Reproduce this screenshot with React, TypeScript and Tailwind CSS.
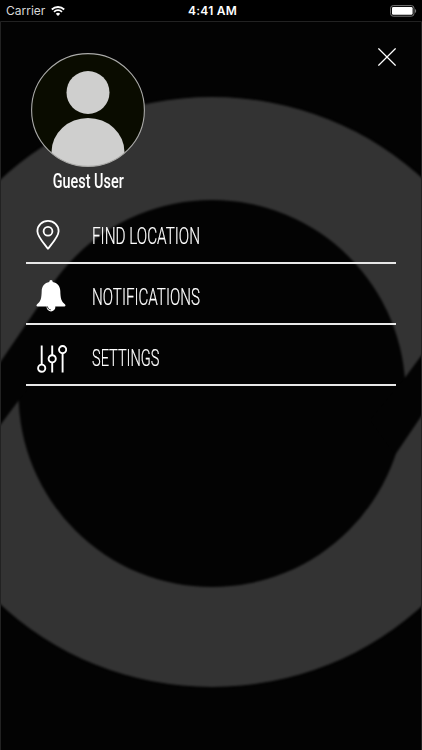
import type { ReactNode } from "react";

/* -------------------------------------------------------------------------
 * Icons
 * -----------------------------------------------------------------------*/

const WifiIcon = () => (
  <svg width="14" height="10" viewBox="0 0 14 10" fill="none">
    <path d="M0.8 3.5a9 9 0 0 1 12.4 0" stroke="white" strokeWidth="1.8" />
    <path d="M3 5.8a5.8 5.8 0 0 1 8 0" stroke="white" strokeWidth="1.7" />
    <path d="M7 10L4.8 7.7a3.2 3.2 0 0 1 4.4 0z" fill="white" />
  </svg>
);

const BatteryIcon = () => (
  <svg width="27" height="12" viewBox="0 0 27 12" fill="none">
    <rect x="0.6" y="0.6" width="23.4" height="10.6" rx="2.6" stroke="#777" />
    <rect x="2" y="2" width="20.6" height="7.8" rx="1.3" fill="white" />
    <path d="M25 4v4c1.6-.6 1.6-3.4 0-4z" fill="#777" />
  </svg>
);

const CloseIcon = () => (
  <svg width="18" height="18" viewBox="0 0 18 18" fill="none">
    <path d="M0.4 0.4L17.6 17.6M17.6 0.4L0.4 17.6" stroke="white" strokeWidth="1.25" />
  </svg>
);

const PinIcon = () => (
  <svg width="24" height="31" viewBox="0 0 24 31" fill="none">
    <path
      d="M12 28.8C8.6 24.2 1.4 16.6 1.4 11.2a10.6 10.3 0 0 1 21.2 0C22.6 16.6 15.4 24.2 12 28.8z"
      stroke="white"
      strokeWidth="1.8"
      strokeLinejoin="round"
    />
    <circle cx="12" cy="11.2" r="4.4" stroke="white" strokeWidth="1.8" />
  </svg>
);

const BellIcon = () => (
  <svg width="30" height="32" viewBox="0 0 30 32">
    <path
      d="M15 0c1 0 1.7.8 1.7 2 4.8.9 7.4 4.2 7.6 9 .2 7 .8 10.3 4.6 13.2 1 .8.7 2.3-.6 2.3H1.6C.3 26.5.1 25 1.1 24.2 5 21.3 5.5 18 5.7 11c.2-4.8 2.8-8.1 7.600-9C13.300.8 14 0 15 0z"
      fill="white"
    />
    <circle cx="15" cy="27" r="4.400" fill="white" />
    <path d="M11.500 26.500c.1 2 1.600 3.300 3.300 3.300" stroke="black" strokeWidth="0.800" fill="none" />
  </svg>
);

const SlidersIcon = () => (
  <svg width="30" height="28" viewBox="0 0 30 28" fill="none" stroke="white" strokeWidth="1.900">
    <path d="M4.700 0.500V19.500M15.200 0.500V10.300M15.200 17.300V27.500M25.600 8V27.500" />
    <circle cx="4.700" cy="23.200" r="3.600" />
    <circle cx="15.200" cy="13.800" r="3.600" />
    <circle cx="25.600" cy="4.600" r="3.600" />
  </svg>
);

const Avatar = () => (
  <svg width="114" height="114" viewBox="0 0 114 114">
    <defs>
      <clipPath id="avatar">
        <circle cx="57" cy="57" r="56.500" />
      </clipPath>
    </defs>
    <g clipPath="url(#avatar)">
      <rect width="114" height="114" fill="#0a0c00" />
      <circle cx="57" cy="39.500" r="21.500" fill="#cfcfce" />
      <path d="M20.500 114v-15a36.500 34 0 0 1 73 0v15z" fill="#cfcfce" />
    </g>
    <circle cx="57" cy="57" r="56.400" fill="none" stroke="#aaaaa8" strokeWidth="1.100" />
  </svg>
);

/* Large ring cut by a diagonal stripe */
const Backdrop = () => (
  <svg
    className="absolute inset-0"
    width="422"
    height="750"
    viewBox="0 0 422 750"
  >
    <defs>
      <filter
        id="soft"
        filterUnits="userSpaceOnUse"
        x="-110"
        y="80"
        width="640"
        height="620"
        colorInterpolationFilters="sRGB"
      >
        <feGaussianBlur stdDeviation="1.200" />
      </filter>
    </defs>
    <g filter="url(#soft)">
      <ellipse cx="212" cy="392" rx="305" ry="295" fill="#333333" />
      <circle cx="212" cy="393.500" r="193.500" fill="#030303" />
      <path d="M-20 392L48 292L60 350L19 400L-20 452z" fill="#030303" />
      <path d="M404 379L450 317V374L395 455L370 420z" fill="#030303" />
    </g>
    <path d="M0.500 750V21.500H421.500V750" fill="none" stroke="#222222" />
  </svg>
);

/* -------------------------------------------------------------------------
 * Menu
 * -----------------------------------------------------------------------*/

type MenuItemProps = {
  icon: ReactNode;
  label: string;
  iconPadding: string;
  scale: string;
};

const MenuItem = ({ icon, label, iconPadding, scale }: MenuItemProps) => (
  <li className="flex h-[61px] items-center border-b-2 border-[#e8e8e8] pt-[7px]">
    <span className={`flex w-[66px] shrink-0 ${iconPadding}`}>{icon}</span>
    <span
      className={`origin-left pt-[2px] text-[23.5px] leading-none font-light whitespace-nowrap text-white [-webkit-text-stroke:0.2px_white] ${scale}`}
    >
      {label}
    </span>
  </li>
);

export default function App() {
  return (
    <div className="relative h-[750px] w-[422px] overflow-hidden bg-[#030303] font-[Roboto,sans-serif] text-white">
      <Backdrop />
      <div className="relative flex h-full flex-col">
        <header className="grid h-[21px] grid-cols-3 items-center bg-black pr-[5px] pl-1.5 font-[Inter,sans-serif] text-[12px]">
          <div className="flex items-center gap-1.5">
            <span className="text-[#d8d8d8]">Carrier</span>
            <WifiIcon />
          </div>
          <span className="pl-0.5 text-center font-semibold tracking-[0.02em]">4:41 AM</span>
          <div className="flex justify-end">
            <BatteryIcon />
          </div>
        </header>
        <div className="flex justify-between pt-8 pr-[26px] pl-[31px]">
          <div className="flex w-[114px] flex-col items-center">
            <Avatar />
            <p className="mt-0.5 text-[20px] leading-6 font-medium whitespace-nowrap">
              <span className="inline-block scale-x-[0.72]">Guest User</span>
            </p>
          </div>
          <button type="button" aria-label="Close" className="-mt-[5px] h-[18px]">
            <CloseIcon />
          </button>
        </div>
        <ul className="mt-[10px] mr-[26px] ml-[26px]">
          <MenuItem
            icon={<PinIcon />}
            label="FIND LOCATION"
            iconPadding="pb-px pl-2.5"
            scale="scale-x-[0.65]"
          />
          <MenuItem
            icon={<BellIcon />}
            label="NOTIFICATIONS"
            iconPadding="pb-[2px] pl-[9.5px]"
            scale="scale-x-[0.645]"
          />
          <MenuItem
            icon={<SlidersIcon />}
            label="SETTINGS"
            iconPadding="pt-[2px] pl-[11px]"
            scale="scale-x-[0.62]"
          />
        </ul>
      </div>
    </div>
  );
}
